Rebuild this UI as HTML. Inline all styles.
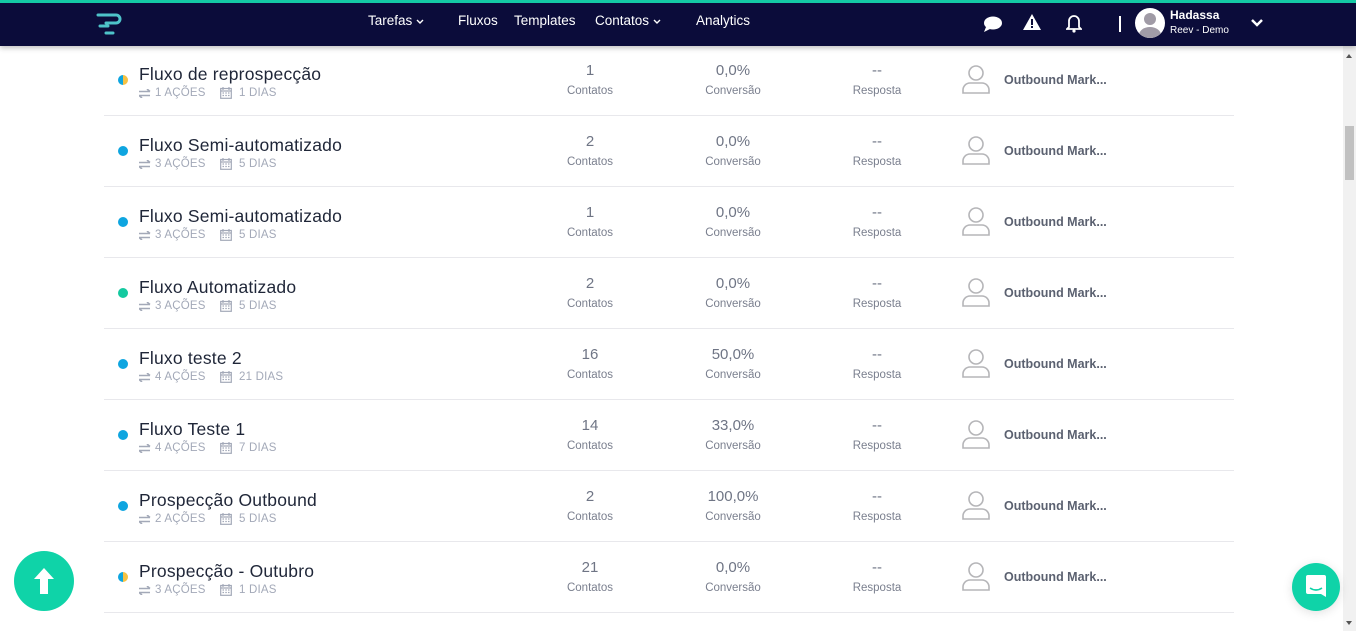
<!DOCTYPE html>
<html><head><meta charset="utf-8"><style>
*{margin:0;padding:0;box-sizing:border-box}
body{width:1356px;height:631px;overflow:hidden;background:#fff;font-family:"Liberation Sans",sans-serif;position:relative}
.nav{position:absolute;top:0;left:0;width:1356px;height:46px;background:#0b0c3a;border-top:3px solid #14c9a5;box-shadow:0 2px 5px rgba(0,0,0,.25);z-index:5;color:#fff}
.nav .m{position:absolute;top:10px;font-size:13.5px}
.row{position:absolute;left:104px;width:1130px;height:71px;border-bottom:1.5px solid #e8e8ec}
.dot{position:absolute;left:14px;top:30px;width:10px;height:10px;border-radius:50%}
.t{position:absolute;left:35px;top:19px;font-size:17.5px;color:#1f2638;letter-spacing:.2px}
.s{position:absolute;left:35px;top:42px;font-size:11.5px;color:#a3a9b8;letter-spacing:.2px;display:flex;align-items:center}
.s svg{margin-right:4px}
.c{position:absolute;text-align:center;width:120px;color:#7a7f8e}
.c b{display:block;font-weight:normal;font-size:15px;color:#6f7585}
.c i{display:block;font-style:normal;font-size:11.5px;margin-top:6px}
.own{position:absolute;left:900px;top:28px;font-size:12.5px;font-weight:bold;color:#5b6170}
.sb{position:absolute;right:0;top:46px;width:13px;height:585px;background:#f1f1f1}
</style></head><body>
<div class="nav">
<svg style="position:absolute;left:96px;top:9px" width="30" height="24" viewBox="0 0 30 24"><path d="M2 3h18a4 4 0 0 1 0 8H10" stroke="#4ec3c9" stroke-width="3" fill="none" stroke-linecap="round"/><path d="M4 14h8M10 21h7" stroke="#4ec3c9" stroke-width="3" stroke-linecap="round"/></svg>
<span class="m" style="left:368px">Tarefas <svg width="8" height="6" viewBox="0 0 8 6"><path d="M1 1l3 3 3-3" stroke="#fff" stroke-width="1.4" fill="none"/></svg></span>
<span class="m" style="left:458px">Fluxos</span>
<span class="m" style="left:514px">Templates</span>
<span class="m" style="left:595px">Contatos <svg width="8" height="6" viewBox="0 0 8 6"><path d="M1 1l3 3 3-3" stroke="#fff" stroke-width="1.4" fill="none"/></svg></span>
<span class="m" style="left:696px">Analytics</span>
<svg style="position:absolute;left:983px;top:12px" width="20" height="18" viewBox="0 0 20 18"><ellipse cx="10" cy="8" rx="9" ry="6.5" fill="#fff"/><path d="M3 12l-2 5 6-3z" fill="#fff"/></svg>
<svg style="position:absolute;left:1023px;top:11px" width="18" height="16" viewBox="0 0 18 16"><path d="M9 0L18 16H0z" fill="#fff"/><rect x="8" y="5" width="2" height="6" fill="#0b0c3a"/><rect x="8" y="12" width="2" height="2" fill="#0b0c3a"/></svg>
<svg style="position:absolute;left:1066px;top:10px" width="16" height="20" viewBox="0 0 16 20"><path d="M3 14V8a5 5 0 0 1 10 0v6l2 2H1z" stroke="#fff" stroke-width="1.8" fill="none"/><circle cx="8" cy="18" r="1.6" fill="#fff"/></svg>
<div style="position:absolute;left:1119px;top:13px;width:1.5px;height:16px;background:#fff"></div>
<div style="position:absolute;left:1135px;top:5px;width:30px;height:30px;border-radius:50%;background:#fff;overflow:hidden"><div style="position:absolute;left:9px;top:5px;width:12px;height:12px;border-radius:50%;background:#a09ba6"></div><div style="position:absolute;left:4px;top:19px;width:22px;height:16px;border-radius:50%;background:#a09ba6"></div></div>
<span style="position:absolute;left:1170px;top:5px;font-size:12px;font-weight:bold">Hadassa</span>
<span style="position:absolute;left:1170px;top:22px;font-size:10px">Reev - Demo</span>
<svg style="position:absolute;left:1250px;top:15px" width="14" height="10" viewBox="0 0 14 10"><path d="M2 2l5 5 5-5" stroke="#fff" stroke-width="2.5" fill="none"/></svg>
</div>
<div id="rows"></div>
<div class="sb"><div style="position:absolute;top:80px;left:2px;width:9px;height:54px;background:#c1c1c1"></div><div style="position:absolute;top:5px;left:3px;border:3.5px solid transparent;border-bottom:4px solid #555;width:0"></div><div style="position:absolute;bottom:3px;left:3px;border:3.5px solid transparent;border-top:4px solid #555;width:0"></div></div>
<div style="position:absolute;left:14px;top:551px;width:60px;height:60px;border-radius:50%;background:#0fd3a8"><svg style="position:absolute;left:19px;top:16px" width="22" height="28" viewBox="0 0 22 28"><path d="M11 1L21 12H15V27H7V12H1z" fill="#fff"/></svg></div>
<div style="position:absolute;left:1292px;top:563px;width:48px;height:48px;border-radius:50%;background:#0fd3a8;box-shadow:0 2px 10px rgba(0,0,0,.12)"><svg style="position:absolute;left:14px;top:12px" width="20" height="23" viewBox="0 0 20 23"><path d="M2 0h16a2 2 0 0 1 2 2v20l-5-3H2a2 2 0 0 1-2-2V2a2 2 0 0 1 2-2z" fill="#fff"/><path d="M4 13q6 4 12 0" stroke="#0fd3a8" stroke-width="1.6" fill="none"/></svg></div>
<script>
var d=[["Fluxo de reprospecção","h",1,1,"1","0,0%"],["Fluxo Semi-automatizado","#0ea5e0",3,5,"2","0,0%"],["Fluxo Semi-automatizado","#0ea5e0",3,5,"1","0,0%"],["Fluxo Automatizado","#14c9a0",3,5,"2","0,0%"],["Fluxo teste 2","#0ea5e0",4,21,"16","50,0%"],["Fluxo Teste 1","#0ea5e0",4,7,"14","33,0%"],["Prospecção Outbound","#0ea5e0",2,5,"2","100,0%"],["Prospecção - Outubro","h",3,1,"21","0,0%"]];
var sw='<svg width="12" height="9" viewBox="0 0 12 9"><path d="M0 2.5h11M8 0l3 2.5M0 6.5h11M3 9L0 6.5" stroke="#a3a9b8" stroke-width="1.6" fill="none"/></svg>';
var cal='<svg width="12" height="12" viewBox="0 0 12 12"><rect x="0.7" y="1.5" width="10.6" height="9.8" stroke="#a3a9b8" stroke-width="1.2" fill="none"/><path d="M0.7 4h10.6M3 0v3M9 0v3" stroke="#a3a9b8" stroke-width="1.2"/><path d="M2.5 6h1.5M5.3 6h1.5M8 6h1.5M2.5 8.5h1.5M5.3 8.5h1.5M8 8.5h1.5" stroke="#a3a9b8" stroke-width="1.2"/></svg>';
var h="";d.forEach(function(r,i){var top=45+i*71;var bg=r[1]=="h"?"linear-gradient(90deg,#0ea5e0 50%,#f6c244 50%)":r[1];
h+='<div class="row" style="top:'+top+'px"><div class="dot" style="background:'+bg+'"></div><div class="t">'+r[0]+'</div><div class="s">'+sw+r[2]+' AÇÕES<span style="width:14px"></span>'+cal+'&nbsp;'+r[3]+' DIAS</div>'+
'<div class="c" style="left:426px;top:17px"><b>'+r[4]+'</b><i>Contatos</i></div><div class="c" style="left:569px;top:17px"><b>'+r[5]+'</b><i>Conversão</i></div><div class="c" style="left:713px;top:17px"><b>--</b><i>Resposta</i></div>'+
'<svg style="position:absolute;left:857px;top:19px" width="30" height="30" viewBox="0 0 30 30"><circle cx="15" cy="9" r="7" stroke="#b5b5b8" stroke-width="1.6" fill="none"/><path d="M2 29v-3a7 7 0 0 1 7-7h12a7 7 0 0 1 7 7v3z" stroke="#b5b5b8" stroke-width="1.6" fill="none"/></svg><div class="own">Outbound Mark...</div></div>';});
document.getElementById("rows").innerHTML=h;
</script>
</body></html>
